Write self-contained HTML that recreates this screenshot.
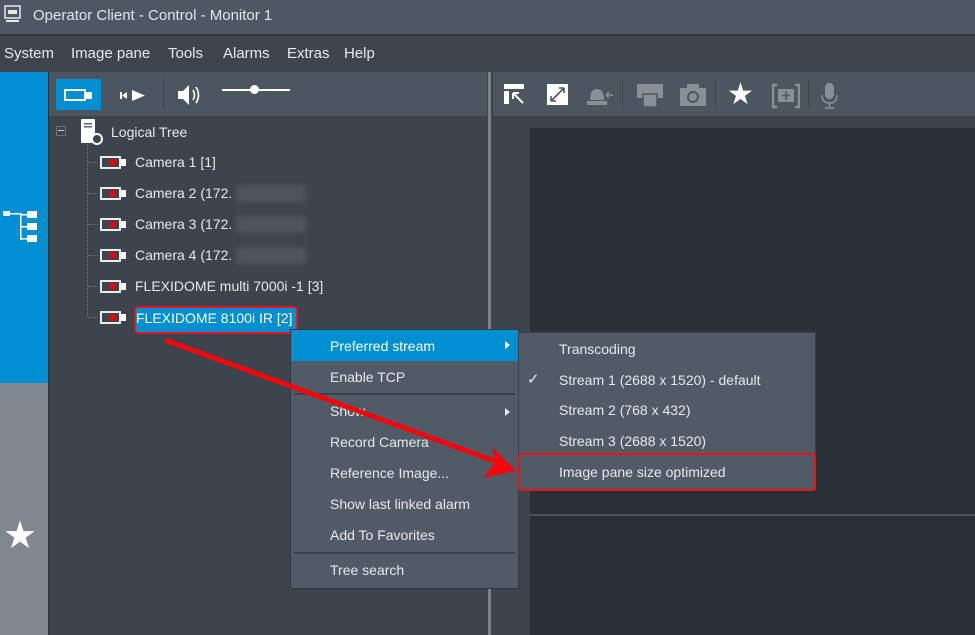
<!DOCTYPE html>
<html><head><meta charset="utf-8"><style>
*{margin:0;padding:0;box-sizing:border-box}
body{width:975px;height:635px;overflow:hidden;background:#3c444d;font-family:"Liberation Sans",sans-serif;color:#e6e9ec;position:relative;font-size:14px}
.a{position:absolute}
.t{position:absolute;white-space:nowrap}
.cam{position:absolute;width:25px;height:12px}
</style></head><body>
<!-- title bar -->
<div class="a" style="left:0;top:0;width:975px;height:34px;background:#4e5864"></div>
<div class="a" style="left:0;top:34px;width:975px;height:2px;background:#2f363e"></div>
<svg class="a" style="left:4px;top:5px" width="18" height="20"><rect x="1" y="1" width="15" height="12" fill="none" stroke="#e6e9ec" stroke-width="1.5"/><rect x="4" y="5" width="9" height="4" fill="#e6e9ec"/><rect x="2" y="15" width="13" height="2" fill="#e6e9ec"/></svg>
<div class="t" style="left:33px;top:7px;font-size:15px;color:#e2e5e8">Operator Client - Control - Monitor 1</div>
<!-- menu -->
<div class="a" style="left:0;top:36px;width:975px;height:36px;background:#3d454e"></div>
<div class="t" style="left:4px;top:45px;font-size:15px">System</div>
<div class="t" style="left:71px;top:45px;font-size:15px">Image pane</div>
<div class="t" style="left:168px;top:45px;font-size:15px">Tools</div>
<div class="t" style="left:223px;top:45px;font-size:15px">Alarms</div>
<div class="t" style="left:287px;top:45px;font-size:15px">Extras</div>
<div class="t" style="left:344px;top:45px;font-size:15px">Help</div>
<!-- sidebar -->
<div class="a" style="left:0;top:72px;width:48px;height:311px;background:#008fd0"></div>
<div class="a" style="left:0;top:383px;width:48px;height:252px;background:#7f8790"></div>
<div class="a" style="left:48px;top:72px;width:1px;height:563px;background:#2c3238"></div>
<svg class="a" style="left:3px;top:210px" width="36" height="36"><g fill="#fff"><rect x="0" y="1" width="7" height="5"/><rect x="24" y="1" width="10" height="7"/><rect x="24" y="13" width="10" height="7"/><rect x="24" y="25" width="10" height="7"/><rect x="7" y="3" width="10" height="1.5"/><rect x="17" y="3" width="1.5" height="27"/><rect x="17" y="4" width="7" height="1.5"/><rect x="17" y="16" width="7" height="1.5"/><rect x="17" y="28" width="7" height="1.5"/></g></svg>
<div class="t" style="left:3px;top:516px;font-size:38px;color:#fff;line-height:40px">★</div>
<!-- tree toolbar -->
<div class="a" style="left:49px;top:72px;width:439px;height:44px;background:#4c5661"></div>
<div class="a" style="left:56px;top:79px;width:45px;height:31px;background:#008fd0"></div>
<svg class="a" style="left:64px;top:87px" width="30" height="16"><rect x="1" y="3" width="20" height="10" fill="none" stroke="#fff" stroke-width="2"/><rect x="22" y="5" width="6" height="7" fill="#fff"/></svg>
<svg class="a" style="left:118px;top:88px" width="30" height="16"><rect x="2" y="4" width="2" height="7" fill="#fff"/><polygon points="4,7.5 9,4 9,11" fill="#fff"/><polygon points="14,2 27,7.5 14,13" fill="#fff"/></svg>
<div class="a" style="left:163px;top:79px;width:1px;height:30px;background:#3a424b"></div>
<svg class="a" style="left:176px;top:83px" width="32" height="24"><polygon points="2,8 7,8 13,2 13,22 7,16 2,16" fill="#fff"/><path d="M17 7 Q20 12 17 17 M20 4 Q25 12 20 20" stroke="#fff" stroke-width="1.6" fill="none"/></svg>
<div class="a" style="left:222px;top:89px;width:68px;height:2px;background:#fff"></div>
<div class="a" style="left:250px;top:85px;width:9px;height:9px;border-radius:50%;background:#fff"></div>
<!-- tree -->
<div class="a" style="left:56px;top:126px;width:10px;height:10px;border:1px solid #6a737d"></div>
<div class="a" style="left:58px;top:130px;width:6px;height:1px;background:#ccc"></div>
<div class="a" style="left:87px;top:142px;width:0;height:175px;border-left:1px dotted #6a737d"></div>
<svg class="a" style="left:79px;top:118px" width="26" height="28"><rect x="2" y="1" width="14" height="24" rx="1" fill="#fff"/><rect x="5" y="5" width="8" height="1.5" fill="#5a636d"/><rect x="5" y="8" width="8" height="1.5" fill="#5a636d"/><circle cx="18" cy="21" r="5" fill="#3c444d" stroke="#fff" stroke-width="2"/></svg>
<div class="t" style="left:111px;top:124px;font-size:14px">Logical Tree</div>
<div id="tree"></div>
<!-- tree items -->
<div class="a" style="left:88px;top:162px;width:10px;border-top:1px dotted #6a737d"></div>
<div class="a" style="left:88px;top:193px;width:10px;border-top:1px dotted #6a737d"></div>
<div class="a" style="left:88px;top:224px;width:10px;border-top:1px dotted #6a737d"></div>
<div class="a" style="left:88px;top:255px;width:10px;border-top:1px dotted #6a737d"></div>
<div class="a" style="left:88px;top:286px;width:10px;border-top:1px dotted #6a737d"></div>
<div class="a" style="left:88px;top:317px;width:10px;border-top:1px dotted #6a737d"></div>
<svg class="a" style="left:100px;top:156px" width="28" height="13"><rect x="1" y="1" width="19" height="11" fill="none" stroke="#fff" stroke-width="1.8"/><rect x="9" y="3.5" width="7" height="6" fill="#e00"/><rect x="21" y="3" width="5" height="7" fill="#fff"/></svg>
<svg class="a" style="left:100px;top:187px" width="28" height="13"><rect x="1" y="1" width="19" height="11" fill="none" stroke="#fff" stroke-width="1.8"/><rect x="9" y="3.5" width="7" height="6" fill="#e00"/><rect x="21" y="3" width="5" height="7" fill="#fff"/></svg>
<svg class="a" style="left:100px;top:218px" width="28" height="13"><rect x="1" y="1" width="19" height="11" fill="none" stroke="#fff" stroke-width="1.8"/><rect x="9" y="3.5" width="7" height="6" fill="#e00"/><rect x="21" y="3" width="5" height="7" fill="#fff"/></svg>
<svg class="a" style="left:100px;top:249px" width="28" height="13"><rect x="1" y="1" width="19" height="11" fill="none" stroke="#fff" stroke-width="1.8"/><rect x="9" y="3.5" width="7" height="6" fill="#e00"/><rect x="21" y="3" width="5" height="7" fill="#fff"/></svg>
<svg class="a" style="left:100px;top:280px" width="28" height="13"><rect x="1" y="1" width="19" height="11" fill="none" stroke="#fff" stroke-width="1.8"/><rect x="9" y="3.5" width="7" height="6" fill="#e00"/><rect x="21" y="3" width="5" height="7" fill="#fff"/></svg>
<svg class="a" style="left:100px;top:311px" width="28" height="13"><rect x="1" y="1" width="19" height="11" fill="none" stroke="#fff" stroke-width="1.8"/><rect x="9" y="3.5" width="7" height="6" fill="#e00"/><rect x="21" y="3" width="5" height="7" fill="#fff"/></svg>
<div class="t" style="left:135px;top:154px">Camera 1 [1]</div>
<div class="t" style="left:135px;top:185px">Camera 2 (172.</div>
<div class="t" style="left:135px;top:216px">Camera 3 (172.</div>
<div class="t" style="left:135px;top:247px">Camera 4 (172.</div>
<div class="a" style="left:236px;top:185px;width:70px;height:17px;background:#4d555e;filter:blur(3px)"></div>
<div class="a" style="left:236px;top:216px;width:70px;height:17px;background:#4d555e;filter:blur(3px)"></div>
<div class="a" style="left:236px;top:247px;width:70px;height:17px;background:#4d555e;filter:blur(3px)"></div>
<div class="t" style="left:135px;top:278px">FLEXIDOME multi 7000i -1 [3]</div>
<div class="a" style="left:134px;top:306px;width:164px;height:28px;background:#008fd0;border:2px solid #e8131b;border-radius:4px"></div>
<div class="t" style="left:136px;top:310px;color:#fff">FLEXIDOME 8100i IR [2]</div>
<!-- splitter -->
<div class="a" style="left:487px;top:72px;width:6px;height:563px;background:#3c444d"></div>
<div class="a" style="left:488px;top:72px;width:3px;height:563px;background:#7a828c"></div>
<!-- right toolbar -->
<div class="a" style="left:493px;top:72px;width:482px;height:44px;background:#4c5661"></div>
<svg class="a" style="left:503px;top:83px" width="24" height="24"><rect x="1" y="1" width="20" height="5" fill="#fff"/><rect x="1" y="8" width="5" height="13" fill="#fff"/><path d="M10 10 L20 20 M10 10 L10 16 M10 10 L16 10" stroke="#fff" stroke-width="2" fill="none"/></svg>
<svg class="a" style="left:546px;top:83px" width="24" height="24"><rect x="1" y="1" width="21" height="21" fill="#fff"/><path d="M5 18 L18 5 M5 18 L5 13 M5 18 L10 18 M18 5 L13 5 M18 5 L18 10" stroke="#4c5661" stroke-width="1.6" fill="none"/></svg>
<svg class="a" style="left:586px;top:83px" width="28" height="24" opacity=".45"><path d="M4 17 Q4 6 11 6 Q18 6 18 17Z" fill="#cfd4d9"/><rect x="1" y="18" width="20" height="4" fill="#cfd4d9"/><path d="M20 12 L27 12 M20 12 L23 9 M20 12 L23 15" stroke="#cfd4d9" stroke-width="1.5" fill="none"/></svg>
<div class="a" style="left:622px;top:80px;width:1px;height:30px;background:#3f474f"></div>
<svg class="a" style="left:636px;top:83px" width="28" height="26" opacity=".45"><rect x="1" y="1" width="26" height="14" fill="#cfd4d9"/><rect x="7" y="11" width="14" height="13" fill="#cfd4d9" stroke="#4c5661" stroke-width="1.5"/></svg>
<svg class="a" style="left:679px;top:83px" width="28" height="24" opacity=".45"><rect x="1" y="5" width="26" height="18" fill="#cfd4d9"/><rect x="8" y="1" width="12" height="5" fill="#cfd4d9"/><circle cx="14" cy="14" r="5" fill="none" stroke="#4c5661" stroke-width="2"/></svg>
<div class="a" style="left:715px;top:80px;width:1px;height:30px;background:#3f474f"></div>
<div class="t" style="left:727px;top:78px;font-size:30px;color:#fff;line-height:34px">★</div>
<svg class="a" style="left:772px;top:83px" width="28" height="26" opacity=".45"><path d="M5 2 L1 2 L1 24 L5 24 M23 2 L27 2 L27 24 L23 24" stroke="#cfd4d9" stroke-width="2.5" fill="none"/><rect x="6" y="6" width="16" height="13" fill="#cfd4d9"/><path d="M14 8 V17 M10 12.5 H18" stroke="#4c5661" stroke-width="1.6"/></svg>
<div class="a" style="left:808px;top:80px;width:1px;height:30px;background:#3f474f"></div>
<svg class="a" style="left:820px;top:82px" width="20" height="28" opacity=".45"><rect x="5" y="1" width="9" height="16" rx="4.5" fill="#cfd4d9"/><path d="M2 13 Q2 21 9.5 21 Q17 21 17 13 M9.5 21 V25 M5 26 H14" stroke="#cfd4d9" stroke-width="1.5" fill="none"/></svg>
<!-- video area -->
<div class="a" style="left:530px;top:128px;width:445px;height:386px;background:#2a3038"></div>
<div class="a" style="left:530px;top:514px;width:445px;height:2px;background:#4a525c"></div>
<div class="a" style="left:530px;top:516px;width:445px;height:119px;background:#2a3038"></div>
<!-- context menu -->
<div class="a" style="left:290px;top:329px;width:229px;height:260px;background:#505b67;border:1px solid #323940"></div>
<div class="a" style="left:291px;top:330px;width:227px;height:31px;background:#008fd0"></div>
<div class="t" style="left:330px;top:338px;color:#fff">Preferred stream</div>
<div class="a" style="left:505px;top:341px;border-left:5px solid #fff;border-top:4px solid transparent;border-bottom:4px solid transparent"></div>
<div class="t" style="left:330px;top:369px">Enable TCP</div>
<div class="a" style="left:294px;top:393px;width:221px;height:2px;background:#3a424b"></div>
<div class="t" style="left:330px;top:403px">Show</div>
<div class="a" style="left:505px;top:408px;border-left:5px solid #e6e9ec;border-top:4px solid transparent;border-bottom:4px solid transparent"></div>
<div class="t" style="left:330px;top:434px">Record Camera</div>
<div class="t" style="left:330px;top:465px">Reference Image...</div>
<div class="t" style="left:330px;top:496px">Show last linked alarm</div>
<div class="t" style="left:330px;top:527px">Add To Favorites</div>
<div class="a" style="left:294px;top:552px;width:221px;height:2px;background:#3a424b"></div>
<div class="t" style="left:330px;top:562px">Tree search</div>
<!-- submenu -->
<div class="a" style="left:518px;top:332px;width:298px;height:159px;background:#505b67;border:1px solid #3a424b"></div>
<div class="t" style="left:559px;top:341px">Transcoding</div>
<div class="t" style="left:527px;top:370px;font-size:15px">✓</div>
<div class="t" style="left:559px;top:372px">Stream 1 (2688 x 1520) - default</div>
<div class="t" style="left:559px;top:402px">Stream 2 (768 x 432)</div>
<div class="t" style="left:559px;top:433px">Stream 3 (2688 x 1520)</div>
<div class="a" style="left:518px;top:453px;width:298px;height:38px;border:2px solid #e8131b;border-radius:4px"></div>
<div class="t" style="left:559px;top:464px">Image pane size optimized</div>
<!-- arrow -->
<svg class="a" style="left:0;top:0" width="975" height="635"><line x1="165" y1="340" x2="497" y2="462" stroke="#f0080c" stroke-width="5"/><polygon points="516,471 483,478 495,462 492,447" fill="#f0080c"/></svg>
</body></html>
